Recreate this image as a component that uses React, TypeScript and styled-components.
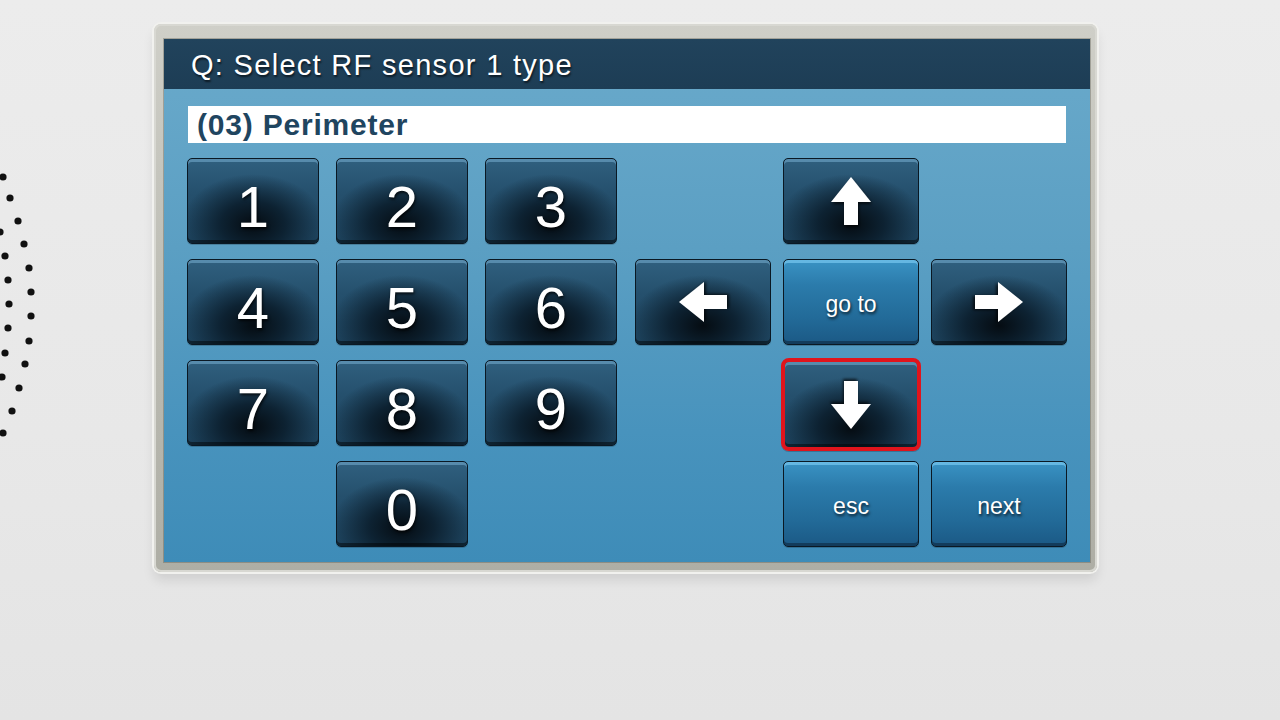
import React from "react";
import styled, { createGlobalStyle, css } from "styled-components";

const GlobalStyle = createGlobalStyle`
  html, body {
    margin: 0;
    padding: 0;
    width: 1280px;
    height: 720px;
    overflow: hidden;
    background: #e9e9e9;
    font-family: "Liberation Sans", Arial, sans-serif;
  }
`;

const Page = styled.div`
  display: flex;
  align-items: flex-start;
  width: 1280px;
  height: 720px;
  background: linear-gradient(180deg, #ececec 0%, #e8e8e8 60%, #e4e4e4 100%);
`;

const Speaker = styled.svg`
  flex: none;
  margin-top: 165px;
`;

const Bezel = styled.div`
  margin: 24px 0 0 114px;
  padding: 15px 7px 10px 10px;
  border-radius: 7px;
  background: linear-gradient(180deg, #cfcfc8 0%, #bdbdb4 50%, #aeaea5 100%);
  box-shadow: inset 0 0 0 2px #d8d8d2, 0 0 0 2px #f1f1ee, 0 8px 12px rgba(0, 0, 0, 0.1);
`;

const Screen = styled.div`
  width: 926px;
  height: 523px;
  display: flex;
  flex-direction: column;
  background: linear-gradient(180deg, #6aaacb 0%, #5b9fc3 40%, #4893bd 75%, #3e8cb8 100%);
  box-shadow: 0 0 0 1px rgba(80, 80, 70, 0.35);
`;

const Header = styled.div`
  height: 50px;
  flex: none;
  display: flex;
  align-items: center;
  padding: 3px 0 0 27px;
  box-sizing: border-box;
  background: linear-gradient(180deg, #21435c 0%, #1d3d55 100%);
  color: #ffffff;
  font-size: 29px;
  letter-spacing: 1.3px;
  text-shadow: 1px 2px 2px rgba(0, 0, 0, 0.6);
`;

const Body = styled.div`
  padding: 17px 24px 0 23px;
  display: flex;
  flex-direction: column;
`;

const Field = styled.div`
  height: 36px;
  margin-left: 1px;
  background: #ffffff;
  display: flex;
  align-items: center;
  padding: 1px 0 0 9px;
  color: #1f4560;
  font-size: 30px;
  letter-spacing: 0.8px;
  font-weight: bold;
`;

const Pads = styled.div`
  display: flex;
  gap: 18px;
  margin-top: 15px;
`;

const Grid = styled.div<{ $col: number; $gap: number }>`
  display: grid;
  grid-template-columns: repeat(3, ${(p) => p.$col}px);
  grid-template-rows: repeat(4, 86px);
  column-gap: ${(p) => p.$gap}px;
  row-gap: 15px;
`;

const Key = styled.div<{ $c: number; $r: number; $blue?: boolean; $sel?: boolean }>`
  grid-column: ${(p) => p.$c};
  grid-row: ${(p) => p.$r};
  box-sizing: border-box;
  border: 1px solid #0a1823;
  border-radius: 5px;
  display: flex;
  align-items: center;
  justify-content: center;
  color: #ffffff;
  text-shadow: 1px 2px 3px rgba(0, 0, 0, 0.75);
  ${(p) =>
    p.$blue
      ? css`
          background: linear-gradient(180deg, #3a93c4 0%, #2b7bab 30%, #226a98 70%, #1b5985 100%);
          box-shadow: inset 0 3px 0 rgba(120, 200, 240, 0.7), inset 0 -3px 0 rgba(10, 30, 50, 0.5),
            0 1px 0 rgba(0, 0, 0, 0.2);
          font-size: 23px;
          padding-top: 4px;
        `
      : css`
          background: radial-gradient(ellipse 55% 60% at 50% 78%, #050c12 0%, #0d2232 45%, rgba(20, 50, 72, 0) 100%),
            linear-gradient(180deg, #30607f 0%, #25506d 40%, #1e4560 100%);
          box-shadow: inset 0 3px 0 rgba(120, 175, 210, 0.55), inset 0 -3px 0 rgba(0, 0, 0, 0.45),
            0 1px 0 rgba(0, 0, 0, 0.2);
          font-size: 58px;
        `}
  ${(p) =>
    p.$sel &&
    css`
      border-color: #e0141c;
      border-width: 4px;
      border-radius: 8px;
      margin: -2px -2px -5px -2px;
    `}
`;

const Digit = styled.span`
  margin-top: 10px;
`;

type Dir = "up" | "down" | "left" | "right";
const rot: Record<Dir, number> = { up: 0, right: 90, down: 180, left: 270 };

const Arrow = ({ dir }: { dir: Dir }) => (
  <svg width="52" height="52" viewBox="-26 -26 52 52" style={{ overflow: "visible" }}>
    <defs>
      <filter id={`sh-${dir}`} x="-50%" y="-50%" width="200%" height="200%">
        <feDropShadow dx="1" dy="2" stdDeviation="1.5" floodColor="#000" floodOpacity="0.7" />
      </filter>
    </defs>
    <g transform={`rotate(${rot[dir]})`} filter={`url(#sh-${dir})`}>
      <path d="M0 -24 L20 1 L7 1 L7 24 L-7 24 L-7 1 L-20 1 Z" fill="#ffffff" />
    </g>
  </svg>
);

const dots: [number, number][] = [
  [3, 177], [10, 198], [18, 221], [0, 232], [24, 244], [5, 256], [29, 268], [8, 280],
  [31, 292], [9, 304], [31, 316], [8, 328], [29, 341], [5, 353], [25, 364], [2, 377],
  [19, 388], [12, 411], [3, 433],
];

const digits: [string, number, number][] = [
  ["1", 1, 1], ["2", 2, 1], ["3", 3, 1],
  ["4", 1, 2], ["5", 2, 2], ["6", 3, 2],
  ["7", 1, 3], ["8", 2, 3], ["9", 3, 3],
  ["0", 2, 4],
];

export default function App() {
  return (
    <>
      <GlobalStyle />
      <Page>
        <Speaker width="40" height="280" viewBox="0 165 40 280">
          {dots.map(([x, y], i) => (
            <circle key={i} cx={x} cy={y} r="3.6" fill="#111" />
          ))}
        </Speaker>
        <Bezel>
          <Screen>
            <Header>Q: Select RF sensor 1 type</Header>
            <Body>
              <Field>(03) Perimeter</Field>
              <Pads>
                <Grid $col={132} $gap={17}>
                  {digits.map(([d, c, r]) => (
                    <Key key={d} $c={c} $r={r}>
                      <Digit>{d}</Digit>
                    </Key>
                  ))}
                </Grid>
                <Grid $col={136} $gap={12}>
                  <Key $c={2} $r={1}>
                    <Arrow dir="up" />
                  </Key>
                  <Key $c={1} $r={2}>
                    <Arrow dir="left" />
                  </Key>
                  <Key $c={2} $r={2} $blue>
                    go to
                  </Key>
                  <Key $c={3} $r={2}>
                    <Arrow dir="right" />
                  </Key>
                  <Key $c={2} $r={3} $sel>
                    <Arrow dir="down" />
                  </Key>
                  <Key $c={2} $r={4} $blue>
                    esc
                  </Key>
                  <Key $c={3} $r={4} $blue>
                    next
                  </Key>
                </Grid>
              </Pads>
            </Body>
          </Screen>
        </Bezel>
      </Page>
    </>
  );
}
